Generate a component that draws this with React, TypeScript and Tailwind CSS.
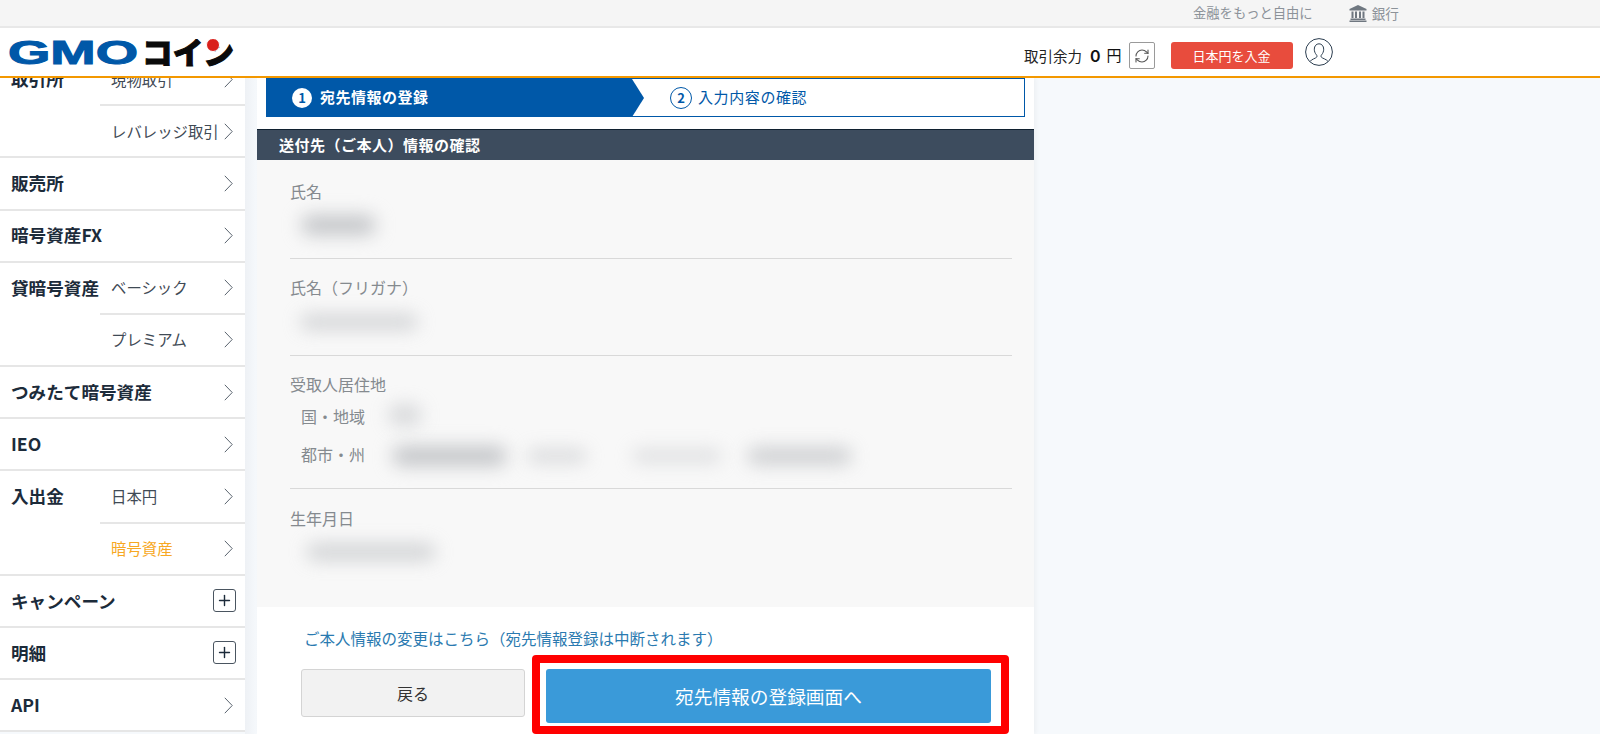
import { Plus, RefreshCw } from "lucide-react";

interface NavGroup {
  label: string;
  subs?: { label: string; active?: boolean }[];
  expand?: boolean;
}

const navGroups: NavGroup[] = [
  { label: "取引所", subs: [{ label: "現物取引" }, { label: "レバレッジ取引" }] },
  { label: "販売所" },
  { label: "暗号資産FX" },
  { label: "貸暗号資産", subs: [{ label: "ベーシック" }, { label: "プレミアム" }] },
  { label: "つみたて暗号資産" },
  { label: "IEO" },
  { label: "入出金", subs: [{ label: "日本円" }, { label: "暗号資産", active: true }] },
  { label: "キャンペーン", expand: true },
  { label: "明細", expand: true },
  { label: "API" },
];

function Chevron() {
  return (
    <svg width="9" height="17" viewBox="0 0 9 17" fill="none" stroke="#59636e" strokeWidth="1" className="shrink-0">
      <path d="M.8.8l7.4 7.7-7.4 7.7" />
    </svg>
  );
}

function Logo() {
  return (
    <svg width="226" height="28" viewBox="0 0 226 28" className="block">
      <text
        x="0"
        y="25"
        fontFamily="'Liberation Sans', sans-serif"
        fontWeight="700"
        fontSize="33"
        fill="#0058a8"
        stroke="#0058a8"
        strokeWidth="1"
        textLength="130"
        lengthAdjust="spacingAndGlyphs"
      >
        GMO
      </text>
      <text
        x="134"
        y="25"
        fontFamily="'Noto Sans CJK JP', sans-serif"
        fontWeight="900"
        fontSize="31"
        fill="#0a0a0a"
        stroke="#0a0a0a"
        strokeWidth="1"
        textLength="92"
        lengthAdjust="spacingAndGlyphs"
      >
        コイン
      </text>
      <circle cx="205" cy="6" r="6.5" fill="#d9201c" stroke="#ffffff" strokeWidth="1" />
    </svg>
  );
}

function BankIcon() {
  return (
    <svg width="18" height="18" viewBox="0 0 18 18" fill="#6f7780" className="shrink-0">
      <path d="M9 1L.5 5v1.5h17V5z" />
      <path d="M2.5 7.5h2v6.5h-2zM6 7.5h2v6.5H6zM10 7.5h2v6.5h-2zM13.5 7.5h2v6.5h-2z" />
      <path d="M1.5 14.5h15V16h-15zM.5 16.5h17V18H.5z" />
    </svg>
  );
}

function UserIcon() {
  return (
    <svg width="28" height="28" viewBox="0 0 28 28" fill="none" stroke="#2c3e50" strokeWidth="1">
      <circle cx="14" cy="14" r="13.4" />
      <path d="M5 23.5c1.5-2.4 5.6-3 6.7-4.4.5-.7.3-1.6-.3-2.3-1.3-1.5-2.1-3.4-2.1-5.6 0-3.2 2-5.4 4.7-5.4s4.7 2.2 4.7 5.4c0 2.2-.8 4.1-2.1 5.6-.6.7-.8 1.6-.3 2.3 1.1 1.4 5.2 2 6.7 4.4" />
    </svg>
  );
}

function Sidebar() {
  return (
    <aside className="w-[245px] shrink-0 -mt-[24px] self-start bg-white">
      {navGroups.map((group) => (
        <div key={group.label} className="flex border-b-2 border-[#e6e6e6]">
          {group.subs ? (
            <>
              <div className="flex h-[50.18px] w-[100px] shrink-0 items-center pl-[11px] text-[17.6px] font-bold text-[#1c2b3a]">
                <span className="whitespace-nowrap">{group.label}</span>
              </div>
              <div className="min-w-0 flex-1">
                {group.subs.map((sub, i) => (
                  <div
                    key={sub.label}
                    className={
                      i === 0
                        ? "flex h-[52.18px] items-center justify-between border-b-2 border-[#e6e6e6] pl-[11px] pr-[12px]"
                        : "flex h-[50.18px] items-center justify-between pl-[11px] pr-[12px]"
                    }
                  >
                    <span className={sub.active ? "text-[15.4px] text-[#f7a823]" : "whitespace-nowrap text-[15.4px] text-[#3f4a55]"}>
                      {sub.label}
                    </span>
                    <Chevron />
                  </div>
                ))}
              </div>
            </>
          ) : (
            <div className="flex h-[50.18px] flex-1 items-center justify-between pl-[11px] pr-[12px] text-[17.6px] font-bold text-[#1c2b3a]">
              <span>{group.label}</span>
              {group.expand ? (
                <span className="-mr-[3px] flex h-[23px] w-[23px] items-center justify-center rounded-[3px] border border-[#4a5560]">
                  <Plus className="h-[17px] w-[17px] text-[#1c2b3a]" strokeWidth={2} />
                </span>
              ) : (
                <Chevron />
              )}
            </div>
          )}
        </div>
      ))}
    </aside>
  );
}

function StepBar() {
  return (
    <div className="ml-[9px] mr-[9px] flex h-[39px] items-center border border-[#0058a8] bg-white">
      <div className="relative flex h-full w-[365px] items-center bg-[#0058a8] pl-[25px]">
        <span className="flex h-[20px] w-[20px] items-center justify-center rounded-full bg-white text-[13px] font-bold text-[#0058a8]">
          1
        </span>
        <span className="ml-[8px] text-[15px] font-bold tracking-[0.5px] text-white">宛先情報の登録</span>
        <span className="absolute -right-[12px] top-0 h-0 w-0 border-y-[19px] border-l-[12px] border-y-transparent border-l-[#0058a8]" />
      </div>
      <div className="ml-[38px] flex items-center text-[15px] text-[#0058a8]">
        <span className="flex h-[22px] w-[22px] items-center justify-center rounded-full border-[1.5px] border-[#0058a8] text-[13px] font-bold">
          2
        </span>
        <span className="ml-[6px] tracking-[0.6px]">入力内容の確認</span>
      </div>
    </div>
  );
}

function BlurBlock({ className }: { className: string }) {
  return <div className={"shrink-0 rounded-full bg-[#c4c6c9] blur-[9px] " + className} />;
}

function InfoPanel() {
  return (
    <div className="h-[447px] bg-[#f8f8f8] pl-[33px] pr-[22px] text-[16px] text-[#858a8f]">
      <div className="h-[99px] border-b border-[#d9d9d9] pt-[19px]">
        <div className="leading-[24px]">氏名</div>
        <BlurBlock className="ml-[11px] mt-[12px] h-[20px] w-[75px]" />
      </div>
      <div className="h-[97px] border-b border-[#d9d9d9] pt-[16px]">
        <div className="leading-[24px]">氏名（フリガナ）</div>
        <BlurBlock className="ml-[10px] mt-[15px] h-[16px] w-[118px] opacity-70" />
      </div>
      <div className="h-[133px] border-b border-[#d9d9d9] pt-[16px]">
        <div className="leading-[24px]">受取人居住地</div>
        <div className="mt-[8px] flex h-[24px] items-center pl-[11px]">
          <span className="w-[83px] shrink-0">国・地域</span>
          <BlurBlock className="mt-[-2px] ml-[4px] h-[22px] w-[34px] opacity-60" />
        </div>
        <div className="mt-[14px] flex h-[24px] items-center pl-[11px]">
          <span className="w-[83px] shrink-0">都市・州</span>
          <BlurBlock className="ml-[8px] mt-[3px] h-[20px] w-[115px]" />
          <BlurBlock className="ml-[20px] mt-[3px] h-[14px] w-[60px] opacity-60" />
          <BlurBlock className="ml-[45px] mt-[3px] h-[14px] w-[90px] opacity-50" />
          <BlurBlock className="ml-[25px] mt-[3px] h-[18px] w-[105px] opacity-80" />
        </div>
      </div>
      <div className="pt-[17px]">
        <div className="leading-[24px]">生年月日</div>
        <BlurBlock className="ml-[16px] mt-[13px] h-[18px] w-[130px] opacity-70" />
      </div>
    </div>
  );
}

export default function App() {
  return (
    <div className="flex h-screen w-full flex-col overflow-hidden bg-[#f6f9fc] font-['Noto_Sans_CJK_JP','Liberation_Sans',sans-serif]">
      <div className="flex h-[28px] shrink-0 items-center border-b-2 border-[#e8e8e8] bg-[#f5f5f5] pl-[1193px] text-[13.3px] text-[#8c9299]">
        <span>金融をもっと自由に</span>
        <span className="ml-[36px]">
          <BankIcon />
        </span>
        <span className="ml-[5px] text-[13.6px]">銀行</span>
      </div>

      <header className="relative z-10 flex h-[50px] shrink-0 items-center border-b-2 border-[#f39800] bg-white">
        <div className="ml-[8px] mt-[2px]">
          <Logo />
        </div>
        <div className="ml-[790px] mt-[7px] flex items-center">
          <span className="whitespace-nowrap text-[14.5px] text-[#222]">取引余力</span>
          <span className="ml-[8px] font-['Inter',sans-serif] text-[16px] font-semibold text-[#111]">0</span>
          <span className="ml-[6px] text-[15px] text-[#111]">円</span>
          <button
            type="button"
            className="ml-[7px] flex h-[27px] w-[26px] items-center justify-center rounded-[2px] border border-[#9a9a9a] bg-white"
          >
            <RefreshCw className="h-[16px] w-[16px] text-[#555]" strokeWidth={1.6} />
          </button>
          <button
            type="button"
            className="ml-[16px] h-[27px] w-[122px] rounded-[3px] bg-[#e84c3d] text-[13px] text-white"
          >
            日本円を入金
          </button>
          <div className="-mt-[8px] ml-[12px]">
            <UserIcon />
          </div>
        </div>
      </header>

      <div className="flex min-h-0 flex-1">
        <Sidebar />
        <div className="w-[12px] shrink-0 bg-gradient-to-r from-[#eef1f5] to-[#f6f9fc]" />
        <main className="w-[777px] shrink-0 bg-white shadow-[2px_0_4px_rgba(0,0,0,0.04)]">
          <StepBar />
          <div className="mt-[12px] flex h-[31px] items-center border-t border-[#10202f] bg-[#3d4c5e] pl-[22px] text-[15px] font-bold tracking-[0.5px] text-white">
            送付先（ご本人）情報の確認
          </div>
          <InfoPanel />
          <div className="pl-[44px] pr-[20px] pt-[22px]">
            <a className="-mt-[2px] block pl-[3px] text-[15.5px] leading-[22px] text-[#2a7ab0]">
              ご本人情報の変更はこちら（宛先情報登録は中断されます）
            </a>
            <div className="mt-[6px] flex items-start">
              <button
                type="button"
                className="mt-[14px] h-[48px] w-[224px] rounded-[3px] border border-[#d4d4d4] bg-[#f2f2f2] text-[16px] text-[#333]"
              >
                戻る
              </button>
              <div className="ml-[7px] h-[79px] w-[477px] shrink-0 rounded-[4px] border-[8px] border-[#ff0000] bg-white pl-[6px] pr-[10px] pt-[6px]">
                <button type="button" className="h-[54px] w-full rounded-[3px] bg-[#3a9ad9] text-[18.7px] text-white">
                  宛先情報の登録画面へ
                </button>
              </div>
            </div>
          </div>
        </main>
      </div>
    </div>
  );
}
